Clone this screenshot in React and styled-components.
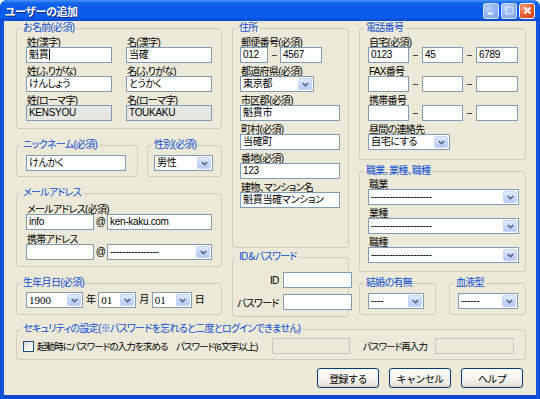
import React from "react";
import styled, { createGlobalStyle } from "styled-components";

const GlobalStyle = createGlobalStyle`
  html, body { margin: 0; padding: 0; background: #ffffff; overflow: hidden; }
  * { box-sizing: border-box; }
  body { font-family: "Liberation Sans", "Noto Sans CJK JP", sans-serif; font-feature-settings: "palt"; font-size: 10px; letter-spacing: -0.7px; color: #000; }
`;

const VALUE_FONT = '"Liberation Sans Narrow", "Liberation Sans", "Noto Sans CJK JP", sans-serif';

const Window = styled.div`
  width: 540px;
  height: 399px;
  display: flex;
  flex-direction: column;
  background: linear-gradient(90deg, #0a3fcc 0, #1a5ee8 2px, #0a47d4 4px, #0a47d4 536px, #1a5ee8 538px, #0a3fcc 540px);
  border-radius: 7px 7px 0 0;
  overflow: hidden;
`;

const TitleBar = styled.div`
  height: 21px;
  flex: none;
  display: flex;
  align-items: center;
  padding: 0 5px 0 5px;
  background: linear-gradient(180deg, #4a93fb 0%, #1466f0 14%, #0a58ea 45%, #0b5ef0 80%, #0748c9 100%);
`;

const Title = styled.div`
  color: #fff;
  font-weight: bold;
  font-size: 11px;
  letter-spacing: -0.4px;
  text-shadow: 1px 1px 0 #0b2a8c;
`;

const Controls = styled.div`
  margin-left: auto;
  display: flex;
  gap: 2px;
`;

const CtrlBtn = styled.div`
  width: 16px;
  height: 16px;
  border-radius: 3px;
  border: 1px solid ${(p) => (p.$close ? "#ffffff" : "rgba(255,255,255,0.6)")};
  background: ${(p) =>
    p.$close
      ? "radial-gradient(circle at 30% 30%, #f2a385 0%, #e2582c 55%, #c63d12 100%)"
      : "radial-gradient(circle at 30% 30%, #b6cdfb 0%, #8db0f4 60%, #7a9fee 100%)"};
  display: flex;
  align-items: center;
  justify-content: center;
`;

const Body = styled.div`
  flex: 1;
  margin: 0 4px 4px 4px;
  background: #ece9d8;
  padding: 1px 10px 0 12px;
  display: flex;
  flex-direction: column;
`;

const MainGrid = styled.div`
  display: grid;
  grid-template-columns: 206px 117px 167px;
  column-gap: 10px;
  align-items: start;
  height: 295px;
`;

const Column = styled.div`
  display: flex;
  flex-direction: column;
  gap: ${(p) => p.$gap}px;
`;

const Group = styled.fieldset`
  margin: 0;
  margin-top: ${(p) => p.$mt ?? 0}px;
  padding: 0;
  min-width: 0;
  height: ${(p) => p.$h}px;
  border: 1px solid #d0cdbc;
  border-radius: 3px;
`;

const Legend = styled.legend`
  margin-left: 4px;
  padding: 0 2px;
  font-size: 10px;
  line-height: 12px;
  color: #0b4cd3;
  white-space: nowrap;
`;

const Stack = styled.div`
  display: flex;
  flex-direction: column;
  gap: ${(p) => p.$gap ?? 4}px;
  padding: ${(p) => p.$pad};
`;

const FieldGrid = styled.div`
  display: grid;
  grid-template-columns: ${(p) => p.$cols};
  column-gap: ${(p) => p.$colGap}px;
  row-gap: 4px;
  padding: ${(p) => p.$pad};
`;

const Field = styled.div`
  display: flex;
  flex-direction: column;
  align-items: flex-start;
`;

const Label = styled.div`
  height: 9px;
  line-height: 9px;
  font-size: 10px;
  padding-left: 1px;
  white-space: nowrap;
`;

const TextBox = styled.div`
  flex: none;
  width: ${(p) => (p.$w ? `${p.$w}px` : "100%")};
  height: 16px;
  border: 1px solid ${(p) => (p.$off ? "#c9c7ba" : "#7f9db9")};
  background: ${(p) => (p.$off ? "#ece9d8" : p.$gray ? "#e6e6e3" : "#ffffff")};
  font-family: ${VALUE_FONT};
  font-size: 10px;
  letter-spacing: -0.3px;
  line-height: 14px;
  padding: 0 2px;
  white-space: nowrap;
  overflow: hidden;
`;

const Caret = styled.span`
  display: inline-block;
  width: 1px;
  height: 11px;
  background: #000;
  vertical-align: -2px;
  margin-left: 1px;
`;

const SelectBox = styled.div`
  flex: none;
  width: ${(p) => (p.$w ? `${p.$w}px` : "100%")};
  height: 16px;
  border: 1px solid #7f9db9;
  background: #fff;
  display: flex;
`;

const SelectValue = styled.span`
  flex: 1;
  padding-left: 2px;
  font-size: ${(p) => (p.$serif ? "11px" : "10px")};
  font-family: ${(p) => (p.$serif ? '"Liberation Serif", serif' : VALUE_FONT)};
  letter-spacing: ${(p) => (p.$serif ? "0" : "-0.3px")};
  line-height: 14px;
  white-space: nowrap;
  overflow: hidden;
`;

const SelectArrow = styled.span`
  width: 14px;
  margin: 1px;
  border-radius: 2px;
  border: 1px solid #c6d5fa;
  background: linear-gradient(180deg, #e2eafe 0%, #c9d8fb 50%, #b7caf6 100%);
  display: flex;
  align-items: center;
  justify-content: center;
`;

const Inline = styled.div`
  display: flex;
  align-items: center;
  gap: ${(p) => p.$gap ?? 0}px;
`;

const Dash = styled.span`
  width: ${(p) => p.$w}px;
  height: 16px;
  display: flex;
  align-items: center;
  justify-content: center;
  &::after {
    content: "";
    width: 5px;
    height: 1px;
    background: #444;
  }
`;

const At = styled.span`
  width: ${(p) => p.$w}px;
  text-align: center;
  font-size: 10px;
  line-height: 16px;
`;

const Unit = styled.span`
  font-size: 10px;
  line-height: 16px;
`;

const PhoneRow = styled.div`
  display: grid;
  grid-template-columns: 41px 13px 41px 13px 42px;
`;

const PairRow = styled.div`
  display: grid;
  grid-template-columns: ${(p) => p.$cols};
  justify-content: space-between;
`;

const IdGrid = styled.div`
  display: grid;
  grid-template-columns: 1fr 69px;
  column-gap: 4px;
  row-gap: 6px;
  align-items: center;
  padding: 9px 6px 0 4px;
`;

const RightLabel = styled.div`
  text-align: right;
  white-space: nowrap;
  font-size: 10px;
`;

const SecurityRow = styled.div`
  display: grid;
  grid-template-columns: 153px 96px 78px 85px 79px;
  align-items: center;
  padding: 3px 0 0 6px;
  font-size: 9.5px;
  letter-spacing: -0.9px;
`;

const CheckLabel = styled.label`
  display: flex;
  align-items: center;
  gap: 3px;
  white-space: nowrap;
`;

const CheckBox = styled.span`
  flex: none;
  width: 11px;
  height: 11px;
  border: 1px solid #1c5180;
  background: linear-gradient(135deg, #dcdcd5 0%, #f4f4f1 60%, #ffffff 100%);
`;

const Plain = styled.span`
  white-space: nowrap;
  text-align: ${(p) => (p.$right ? "right" : "left")};
  padding-right: ${(p) => p.$pr ?? 0}px;
`;

const ButtonRow = styled.div`
  display: flex;
  justify-content: flex-end;
  gap: 10px;
  margin-top: 8px;
  padding-right: 3px;
`;

const Button = styled.button`
  width: 62px;
  height: 20px;
  border: 1px solid #003c74;
  border-radius: 3px;
  background: linear-gradient(180deg, #ffffff 0%, #f5f4ef 45%, #ebe9e1 80%, #d8d3c7 100%);
  font-family: inherit;
  font-size: 10px;
  letter-spacing: -0.6px;
  color: #000;
  padding: 0;
`;

const Chevron = () => (
  <svg width="7" height="5" viewBox="0 0 7 5">
    <path d="M0.8 1 L3.5 3.7 L6.2 1" fill="none" stroke="#4d6185" strokeWidth="1.6" />
  </svg>
);

const Select = ({ w, serif, children }) => (
  <SelectBox $w={w}>
    <SelectValue $serif={serif}>{children}</SelectValue>
    <SelectArrow>
      <Chevron />
    </SelectArrow>
  </SelectBox>
);

export default function App() {
  return (
    <>
      <GlobalStyle />
      <Window>
        <TitleBar>
          <Title>ユーザーの追加</Title>
          <Controls>
            <CtrlBtn>
              <svg width="8" height="8" viewBox="0 0 8 8">
                <rect x="1" y="5.5" width="5" height="2" fill="rgba(255,255,255,0.85)" />
              </svg>
            </CtrlBtn>
            <CtrlBtn>
              <svg width="9" height="9" viewBox="0 0 9 9">
                <rect x="1" y="1" width="7" height="7" fill="none" stroke="rgba(255,255,255,0.6)" strokeWidth="1.2" />
              </svg>
            </CtrlBtn>
            <CtrlBtn $close>
              <svg width="9" height="9" viewBox="0 0 9 9">
                <path d="M1.5 1.5 L7.5 7.5 M7.5 1.5 L1.5 7.5" stroke="#fff" strokeWidth="1.8" />
              </svg>
            </CtrlBtn>
          </Controls>
        </TitleBar>
        <Body>
          <MainGrid>
            <Column $gap={10}>
              <Group $h={107}>
                <Legend>お名前(必須)</Legend>
                <FieldGrid $cols="86px 86px" $colGap={14} $pad="4px 0 0 9px">
                  <Field>
                    <Label>姓(漢字)</Label>
                    <TextBox>
                      魁貫
                      <Caret />
                    </TextBox>
                  </Field>
                  <Field>
                    <Label>名(漢字)</Label>
                    <TextBox>当確</TextBox>
                  </Field>
                  <Field>
                    <Label>姓(ふりがな)</Label>
                    <TextBox>けんしょう</TextBox>
                  </Field>
                  <Field>
                    <Label>名(ふりがな)</Label>
                    <TextBox>とうかく</TextBox>
                  </Field>
                  <Field>
                    <Label>姓(ローマ字)</Label>
                    <TextBox $gray>KENSYOU</TextBox>
                  </Field>
                  <Field>
                    <Label>名(ローマ字)</Label>
                    <TextBox $gray>TOUKAKU</TextBox>
                  </Field>
                </FieldGrid>
              </Group>

              <PairRow $cols="122px 75px">
                <Group $h={38}>
                  <Legend>ニックネーム(必須)</Legend>
                  <Stack $pad="4px 0 0 9px">
                    <TextBox $w={100}>けんかく</TextBox>
                  </Stack>
                </Group>
                <Group $h={38}>
                  <Legend>性別(必須)</Legend>
                  <Stack $pad="4px 0 0 6px">
                    <Select w={59}>男性</Select>
                  </Stack>
                </Group>
              </PairRow>

              <Group $h={80}>
                <Legend>メールアドレス</Legend>
                <Stack $pad="6px 0 0 9px" $gap={5}>
                  <Field>
                    <Label>メールアドレス(必須)</Label>
                    <Inline>
                      <TextBox $w={68}>info</TextBox>
                      <At $w={13}>@</At>
                      <TextBox $w={105}>ken-kaku.com</TextBox>
                    </Inline>
                  </Field>
                  <Field>
                    <Label>携帯アドレス</Label>
                    <Inline>
                      <TextBox $w={68} />
                      <At $w={13}>@</At>
                      <Select w={105}>----------------</Select>
                    </Inline>
                  </Field>
                </Stack>
              </Group>

              <Group $h={38}>
                <Legend>生年月日(必須)</Legend>
                <Stack $pad="3px 0 0 9px">
                  <Inline $gap={3}>
                    <Select w={57} serif>1900</Select>
                    <Unit>年</Unit>
                    <Select w={38} serif>01</Select>
                    <Unit>月</Unit>
                    <Select w={40} serif>01</Select>
                    <Unit>日</Unit>
                  </Inline>
                </Stack>
              </Group>
            </Column>

            <Column $gap={3}>
              <Group $h={226}>
                <Legend>住所</Legend>
                <Stack $pad="4px 0 0 7px" $gap={4}>
                  <Field>
                    <Label>郵便番号(必須)</Label>
                    <Inline>
                      <TextBox $w={28}>012</TextBox>
                      <Dash $w={12} />
                      <TextBox $w={42}>4567</TextBox>
                    </Inline>
                  </Field>
                  <Field>
                    <Label>都道府県(必須)</Label>
                    <Select w={74}>東京都</Select>
                  </Field>
                  <Field>
                    <Label>市区郡(必須)</Label>
                    <TextBox $w={100}>魁貫市</TextBox>
                  </Field>
                  <Field>
                    <Label>町村(必須)</Label>
                    <TextBox $w={100}>当確町</TextBox>
                  </Field>
                  <Field>
                    <Label>番地(必須)</Label>
                    <TextBox $w={100}>123</TextBox>
                  </Field>
                  <Field>
                    <Label>建物、マンション名</Label>
                    <TextBox $w={100}>魁貫当確マンション</TextBox>
                  </Field>
                </Stack>
              </Group>
              <Group $h={66}>
                <Legend>ID＆パスワード</Legend>
                <IdGrid>
                  <RightLabel>ID</RightLabel>
                  <TextBox />
                  <RightLabel>パスワード</RightLabel>
                  <TextBox />
                </IdGrid>
              </Group>
            </Column>

            <Column $gap={5}>
              <Group $h={138}>
                <Legend>電話番号</Legend>
                <Stack $pad="4px 0 0 8px" $gap={4}>
                  <Field>
                    <Label>自宅(必須)</Label>
                    <PhoneRow>
                      <TextBox>0123</TextBox>
                      <Dash $w={13} />
                      <TextBox>45</TextBox>
                      <Dash $w={13} />
                      <TextBox>6789</TextBox>
                    </PhoneRow>
                  </Field>
                  <Field>
                    <Label>FAX番号</Label>
                    <PhoneRow>
                      <TextBox />
                      <Dash $w={13} />
                      <TextBox />
                      <Dash $w={13} />
                      <TextBox />
                    </PhoneRow>
                  </Field>
                  <Field>
                    <Label>携帯番号</Label>
                    <PhoneRow>
                      <TextBox />
                      <Dash $w={13} />
                      <TextBox />
                      <Dash $w={13} />
                      <TextBox />
                    </PhoneRow>
                  </Field>
                  <Field>
                    <Label>昼間の連絡先</Label>
                    <Select w={82}>自宅にする</Select>
                  </Field>
                </Stack>
              </Group>

              <Group $h={107}>
                <Legend>職業、業種、職種</Legend>
                <Stack $pad="3px 0 0 8px" $gap={4}>
                  <Field>
                    <Label>職業</Label>
                    <Select w={151}>--------------------</Select>
                  </Field>
                  <Field>
                    <Label>業種</Label>
                    <Select w={151}>--------------------</Select>
                  </Field>
                  <Field>
                    <Label>職種</Label>
                    <Select w={151}>--------------------</Select>
                  </Field>
                </Stack>
              </Group>

              <PairRow $cols="77px 77px">
                <Group $h={38}>
                  <Legend>結婚の有無</Legend>
                  <Stack $pad="4px 0 0 8px">
                    <Select w={56}>----</Select>
                  </Stack>
                </Group>
                <Group $h={38}>
                  <Legend>血液型</Legend>
                  <Stack $pad="4px 0 0 8px">
                    <Select w={60}>------</Select>
                  </Stack>
                </Group>
              </PairRow>
            </Column>
          </MainGrid>

          <Group $h={37} $mt={6}>
            <Legend>セキュリティの設定(※パスワードを忘れると二度とログインできません)</Legend>
            <SecurityRow>
              <CheckLabel>
                <CheckBox />
                起動時にパスワードの入力を求める
              </CheckLabel>
              <Plain>パスワード(6文字以上)</Plain>
              <TextBox $off />
              <Plain $right $pr={8}>パスワード再入力</Plain>
              <TextBox $off />
            </SecurityRow>
          </Group>

          <ButtonRow>
            <Button>登録する</Button>
            <Button>キャンセル</Button>
            <Button>ヘルプ</Button>
          </ButtonRow>
        </Body>
      </Window>
    </>
  );
}
